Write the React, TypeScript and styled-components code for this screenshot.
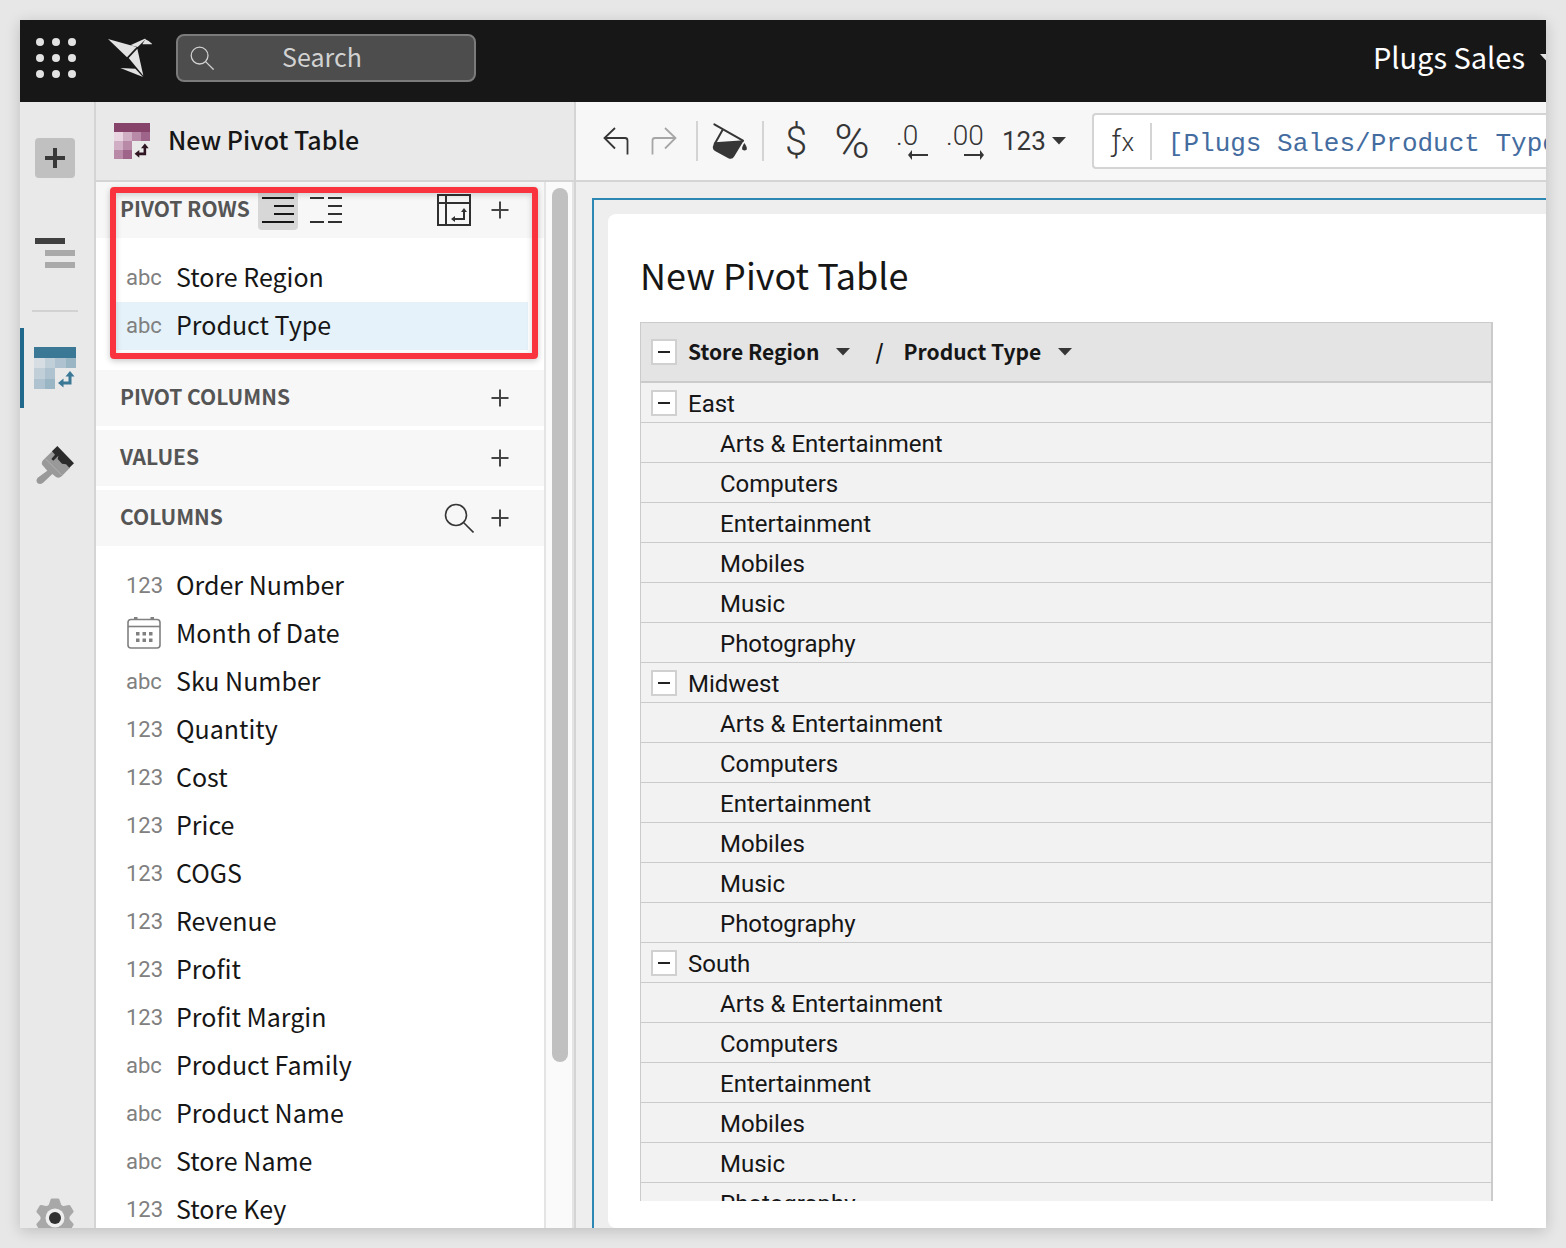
import React from "react";
import styled, { createGlobalStyle } from "styled-components";

const sans = `"Noto Sans CJK SC", "Noto Sans", sans-serif`;
const grid = `Roboto, "Liberation Sans", sans-serif`;
const mono = `"Liberation Mono", monospace`;

const GlobalStyle = createGlobalStyle`
  * { box-sizing: border-box; }
  body { margin: 0; background: #e7e7e7; color: #161616; font-family: ${sans}; }
  button, input { font: inherit; color: inherit; }
  h1, h2, h3, ul { margin: 0; padding: 0; font-weight: inherit; }
`;

const Page = styled.div`
  height: 100vh;
  padding: 20px;
`;

const Frame = styled.div`
  display: flex;
  flex-direction: column;
  height: 100%;
  overflow: hidden;
  background: #eeeeee;
  box-shadow: 0 3px 14px rgba(0, 0, 0, 0.18);
`;

const PlainButton = styled.button`
  display: flex;
  align-items: center;
  justify-content: center;
  flex: none;
  padding: 0;
  border: 0;
  background: none;
`;

/* ---- Top bar ---- */

const TopBar = styled.header`
  display: flex;
  align-items: center;
  flex: none;
  height: 82px;
  padding: 0 0 6px 16px;
  background: #171717;
  color: #fff;
`;

const LogoLink = styled.a`
  display: flex;
  margin: 0 24px 0 32px;
`;

const SearchBox = styled.label`
  display: flex;
  align-items: center;
  width: 300px;
  height: 48px;
  border: 2px solid #7b7b7b;
  border-radius: 8px;
  background: #4d4d4d;
  padding: 0 44px 0 12px;
`;

const SearchInput = styled.input`
  flex: 1;
  min-width: 0;
  padding: 0 0 5px;
  border: 0;
  outline: 0;
  background: none;
  font-size: 25px;
  line-height: 40px;
  text-align: center;
  &::placeholder { color: #d2d2d2; opacity: 1; }
`;

const WorkbookButton = styled(PlainButton)`
  gap: 15px;
  margin: 0 -8px 0 auto;
  font-size: 29px;
  line-height: 40px;
`;

const WorkbookName = styled.span`
  padding-bottom: 5px;
`;

/* ---- Body ---- */

const Body = styled.div`
  display: flex;
  flex: 1;
  min-height: 0;
`;

const Rail = styled.nav`
  display: flex;
  flex-direction: column;
  align-items: stretch;
  flex: none;
  gap: 16px;
  width: 76px;
  padding-top: 16px;
  overflow: hidden;
  border-right: 2px solid #d4d4d4;
  background: #e9e9e9;
`;

const RailButton = styled(PlainButton)<{ $active?: boolean; $last?: boolean }>`
  height: 80px;
  padding-right: ${(p) => (p.$active ? 8 : 4)}px;
  border-left: ${(p) => (p.$active ? "4px solid #21698c" : "0")};
  margin: ${(p) => (p.$last ? "auto 0 -30px" : "0")};
`;

const AddTile = styled.span`
  display: flex;
  padding: 10px;
  border-radius: 4px;
  background: #c0c0c0;
`;

const RailDivider = styled.hr`
  width: 46px;
  height: 2px;
  margin: 0 0 0 12px;
  border: 0;
  background: #d2d2d2;
`;

const Panel = styled.aside`
  display: flex;
  flex-direction: column;
  flex: none;
  width: 480px;
  border-right: 2px solid #d4d4d4;
  background: #fff;
`;

const PanelHeader = styled.div`
  display: flex;
  align-items: center;
  flex: none;
  gap: 18px;
  height: 80px;
  padding: 0 18px;
  border-bottom: 2px solid #d4d4d4;
  background: #e9e9e9;
`;

const PanelTitle = styled.h2`
  padding-bottom: 5px;
  font-size: 25px;
  line-height: 32px;
  font-weight: 500;
`;

const PanelBody = styled.div`
  display: flex;
  flex: 1;
  min-height: 0;
`;

const Sections = styled.div`
  position: relative;
  display: flex;
  flex-direction: column;
  flex: 1;
  gap: 4px;
  overflow: hidden;
  border-right: 2px solid #e4e4e4;
`;

const ScrollTrack = styled.div`
  flex: none;
  width: 28px;
  padding: 6px 0 0 6px;
  border-right: 2px solid #e4e4e4;
  background: #fafafa;
`;

const ScrollThumb = styled.div`
  width: 16px;
  height: 84%;
  border-radius: 8px;
  background: #c0c0c0;
`;

const SectionHeader = styled.div`
  display: flex;
  align-items: center;
  height: 56px;
  padding: 0 24px;
  background: #f7f7f7;
`;

const SectionTitle = styled.h3`
  margin-right: 8px;
  padding-bottom: 5px;
  color: #555555;
  font-size: 21px;
  line-height: 32px;
  font-weight: 600;
`;

const SectionTools = styled.div<{ $end?: boolean }>`
  display: flex;
  gap: ${(p) => (p.$end ? 6 : 8)}px;
  margin-left: ${(p) => (p.$end ? "auto" : 0)};
`;

const IconButton = styled(PlainButton)<{ $on?: boolean; $end?: boolean }>`
  justify-content: ${(p) => (p.$end ? "flex-end" : "center")};
  width: 40px;
  height: 40px;
  border-radius: 4px;
  background: ${(p) => (p.$on ? "#d7d7d7" : "none")};
`;

const FieldList = styled.ul`
  padding: 16px;
  list-style: none;
`;

const Field = styled.li<{ $selected?: boolean }>`
  display: flex;
  align-items: center;
  gap: 14px;
  height: 48px;
  padding: 0 14px;
  background: ${(p) => (p.$selected ? "#e5f2f9" : "none")};
  font-size: 25px;
  line-height: 32px;
`;

const FieldType = styled.span`
  display: flex;
  flex: none;
  width: 36px;
  color: #808080;
  font-family: ${grid};
  font-size: 22px;
`;

const FieldName = styled.span`
  padding-bottom: 5px;
`;

const Highlight = styled.div`
  position: absolute;
  top: 5px;
  left: 14px;
  right: 6px;
  height: 172px;
  border: 6px solid #f9343f;
  border-radius: 4px;
  box-shadow: 0 2px 6px rgba(0, 0, 0, 0.22), inset 0 2px 6px rgba(0, 0, 0, 0.16);
  pointer-events: none;
`;

/* ---- Main area ---- */

const Main = styled.main`
  display: flex;
  flex-direction: column;
  flex: 1;
  min-width: 0;
`;

const Toolbar = styled.div`
  display: flex;
  align-items: center;
  flex: none;
  height: 80px;
  padding-left: 22px;
  border-bottom: 2px solid #d4d4d4;
  background: #f7f7f7;
  color: #363636;
`;

const ToolGroup = styled.div<{ $gap: number; $inset?: number }>`
  display: flex;
  align-items: center;
  flex: none;
  gap: ${(p) => p.$gap}px;
  margin-left: ${(p) => p.$inset ?? 0}px;
`;

const ToolButton = styled(PlainButton)<{ $w: number }>`
  width: ${(p) => p.$w}px;
  height: 48px;
`;

const Glyph = styled.span<{ $size: number }>`
  padding-top: 2px;
  font-family: ${grid};
  font-weight: 300;
  font-size: ${(p) => p.$size}px;
  line-height: 40px;
`;

const DecimalButton = styled(ToolButton)`
  flex-direction: column;
  align-items: flex-end;
`;

const DecimalText = styled.span`
  align-self: flex-start;
  font-family: ${grid};
  font-weight: 300;
  font-size: 28px;
  line-height: 28px;
`;

const FormatButton = styled(PlainButton)`
  gap: 6px;
  margin: 0 26px 0 18px;
  font-family: ${grid};
  font-size: 26px;
`;

const Separator = styled.span`
  flex: none;
  width: 2px;
  height: 40px;
  margin: 0 14px;
  background: #d4d4d4;
`;

const FormulaBar = styled.label`
  display: flex;
  align-items: center;
  flex: 1;
  min-width: 0;
  height: 56px;
  border: 2px solid #d4d4d4;
  border-right: 0;
  border-radius: 4px 0 0 4px;
  background: #fff;
`;

const FormulaIcon = styled.span`
  display: flex;
  align-items: baseline;
  justify-content: center;
  flex: none;
  width: 58px;
  padding-left: 2px;
  font-family: ${grid};
  font-weight: 300;
  font-size: 30px;
  line-height: 36px;
  border-right: 2px solid #d4d4d4;
`;

const FormulaX = styled.span`
  font-size: 26px;
`;

const FormulaInput = styled.input`
  flex: 1;
  min-width: 0;
  padding: 6px 0 0 16px;
  border: 0;
  outline: 0;
  background: none;
  color: #446c9f;
  font-family: ${mono};
  font-size: 26px;
  line-height: 40px;
`;

const Selection = styled.section`
  display: flex;
  flex: 1;
  min-height: 0;
  margin: 16px 0 0 16px;
  padding: 14px 0 0 14px;
  border-top: 2px solid #2c87b2;
  border-left: 2px solid #2c87b2;
`;

const Card = styled.div`
  display: flex;
  flex-direction: column;
  flex: 1;
  min-width: 0;
  padding: 36px 53px 27px 32px;
  border-radius: 8px 0 0 8px;
  background: #fff;
`;

const CardTitle = styled.h1`
  flex: none;
  height: 72px;
  font-size: 36px;
  line-height: 48px;
`;

const TableClip = styled.div`
  flex: 1;
  min-height: 0;
  overflow: hidden;
  border: solid #cbcbcb;
  border-width: 1px 2px 0 1px;
`;

const PivotTable = styled.table`
  width: 100%;
  border-collapse: separate;
  border-spacing: 0;
  background: #f2f2f2;
  color: #161616;
  font-family: ${grid};
  font-size: 24px;
  line-height: 28px;
`;

const HeadCell = styled.th`
  height: 60px;
  padding: 0 10px 2px;
  border-bottom: 2px solid #cbcbcb;
  background: #e4e4e4;
  font-family: ${sans};
  font-size: 21px;
  font-weight: 600;
  text-align: left;
`;

const Cell = styled.td<{ $nested?: boolean }>`
  height: 40px;
  padding: 2px 10px 0 ${(p) => (p.$nested ? 79 : 10)}px;
  border-bottom: 1px solid #cbcbcb;
`;

const CellRow = styled.div`
  display: flex;
  align-items: center;
`;

const Toggle = styled(PlainButton)<{ $head?: boolean }>`
  width: 26px;
  height: 26px;
  margin: ${(p) => (p.$head ? "2px 11px 0 0" : "0 11px 2px 0")};
  border: 2px solid #d0d0d0;
  background: #fff;
`;

const CaretButton = styled(PlainButton)`
  width: 48px;
  height: 28px;
  padding-top: 2px;
`;

const Slash = styled.span`
  margin: 0 20px 0 8px;
`;

/* ---- Drawings ---- */

const Caret = ({ color = "#363636" }: { color?: string }) => (
  <svg width="14" height="8" viewBox="0 0 14 8" aria-hidden="true">
    <path d="M0 0h14L7 7.5z" fill={color} />
  </svg>
);

const AppsIcon = () => (
  <svg width="40" height="40" viewBox="0 0 40 40" fill="#e2e2e2" aria-hidden="true">
    {[4, 20, 36].map((y) => [4, 20, 36].map((x) => <circle key={`${x}-${y}`} cx={x} cy={y} r="4" />))}
  </svg>
);

const Bird = () => (
  <svg width="44" height="40" viewBox="24 39 132 120" fill="#e2e2e2" aria-hidden="true">
    <path d="M24 42 110 66 81 97z" />
    <path d="M91 61 134 41 138 42 113 66z" />
    <path d="M136 43 146 48 158 58H127z" />
    <path d="M112 71 130 152 86 99z" />
    <path d="M61 129 106 131 129 156z" />
  </svg>
);

const SearchIcon = ({ size, color }: { size: number; color: string }) => (
  <svg width={size} height={size} viewBox="0 0 30 30" fill="none" stroke={color} strokeWidth="1.6" aria-hidden="true">
    <circle cx="12" cy="12" r="10.5" />
    <path d="m19.5 19.5 10 10" />
  </svg>
);

const Plus = () => (
  <svg width="18" height="18" viewBox="0 0 18 18" stroke="#444" strokeWidth="2" aria-hidden="true">
    <path d="M9 .5v17M.5 9h17" />
  </svg>
);

const BoldPlus = () => (
  <svg width="20" height="20" viewBox="0 0 20 20" stroke="#383838" strokeWidth="4" aria-hidden="true">
    <path d="M10 0v20M0 10h20" />
  </svg>
);

const OutlineIcon = () => (
  <svg width="40" height="32" viewBox="0 0 40 32" aria-hidden="true">
    <path d="M0 0h30v6H0z" fill="#404040" />
    <path d="M10 12h30v6H10zM10 24h30v6H10z" fill="#aaa" />
  </svg>
);

const PivotIcon = ({ size, c }: { size: number; c: string[] }) => (
  <svg width={size} height={size} viewBox="0 0 42 42" shapeRendering="crispEdges" aria-hidden="true">
    <path d="M0 0h42v10.5H0z" fill={c[0]} />
    <path d="M0 10.5h11v10.5H0z" fill={c[1]} />
    <path d="M11 10.5h10v10.5H11zM0 21h11v10.5H0z" fill={c[2]} />
    <path d="M21 10.5h10.5v10.5H21zM0 31.5h11V42H0z" fill={c[3]} />
    <path d="M31.5 10.5H42v10.5H31.5zM11 31.5h10V42H11z" fill={c[4]} />
    <path d="M11 21h10v10.5H11z" fill={c[5]} />
    <g shapeRendering="geometricPrecision" fill={c[6]}>
      <path d="M34.5 28h3v9.5H28v-3h6.5z" />
      <path d="m36 24 4.5 5.5h-9zM24 36l5.5-4.5v9z" />
    </g>
  </svg>
);

const BrushIcon = () => (
  <svg width="40" height="40" viewBox="45 72 120 120" aria-hidden="true">
    <path d="M98 92 150 143 125 169q-9 8-18 1l-10-8-26 25q-8 8-18 3-7-8 0-17l29-21-15-17q-4-7 2-14z" fill="#999" />
    <path d="m112 78 50 52-14 13-10-10-12-2-13-14 2-10-15 15-6-5 11-13-9-10z" fill="#2b2b2b" />
    <path d="m77 117 48 48" stroke="#bdbdbd" strokeWidth="2" />
  </svg>
);

const GearIcon = () => (
  <svg width="40" height="40" viewBox="0 0 40 40" aria-hidden="true">
    <g fill="#a8a8a8" stroke="#a8a8a8" strokeWidth="3" strokeLinejoin="round">
      <circle cx="20" cy="20" r="13" />
      {[0, 60, 120, 180, 240, 300].map((a) => (
        <path key={a} d="m15 8 2-6h6l2 6z" transform={`rotate(${a} 20 20)`} />
      ))}
    </g>
    <circle cx="20" cy="20" r="9.5" fill="#eee" />
    <circle cx="20" cy="20" r="6" fill="#303030" />
  </svg>
);

const NestedRowsIcon = () => (
  <svg width="32" height="26" viewBox="0 0 32 26" stroke="#161616" strokeWidth="2" aria-hidden="true">
    <path d="M0 1h32M12 9h20M12 17h20M0 25h32" />
  </svg>
);

const SplitRowsIcon = () => (
  <svg width="32" height="26" viewBox="0 0 32 26" stroke="#303030" strokeWidth="2" aria-hidden="true">
    <path d="M0 1h14M18 1h14M18 9h14M18 17h14M0 25h14M18 25h14" />
  </svg>
);

const SwapIcon = () => (
  <svg width="34" height="32" viewBox="0 0 34 32" fill="none" stroke="#303030" strokeWidth="2" aria-hidden="true">
    <path d="M1 1h32v30H1zM1 9h32M9 1v30M27 17v8H17" />
    <path d="m24 18 3-4 3 4zM18 22l-4 3 4 3z" fill="#303030" stroke="none" />
  </svg>
);

const CalendarIcon = () => (
  <svg width="36" height="34" viewBox="0 0 36 34" fill="none" stroke="#808080" strokeWidth="1.6" aria-hidden="true">
    <rect x="2" y="2.5" width="32" height="28.5" rx="3" />
    <path d="M2 9.5h32" />
    <path d="M8 1.5h3.5M24.5 1.5H28" strokeWidth="3" />
    <g fill="#808080" stroke="none">
      {[10, 16.5, 23].map((x) => [15, 21.5].map((y) => <rect key={`${x}-${y}`} x={x} y={y} width="3.5" height="3.5" />))}
    </g>
  </svg>
);

const UndoIcon = ({ redo }: { redo?: boolean }) => (
  <svg width="26" height="28" viewBox="0 0 26 28" fill="none" stroke={redo ? "#a6a6a6" : "#363636"} strokeWidth="1.8" aria-hidden="true">
    <g transform={redo ? "matrix(-1 0 0 1 26 0)" : undefined}>
      <path d="M12 1 1.5 11 12 21.5M1.5 11H22q2.5 0 2.5 2.5v14" />
    </g>
  </svg>
);

const BucketIcon = () => (
  <svg width="36" height="38" viewBox="366 66 108 114" fill="none" aria-hidden="true">
    <path d="m373 73 86 49M398 89l-24 43" stroke="#363636" strokeWidth="6" strokeLinecap="round" />
    <path d="m374 127 88-6-29 48q-6 11-18 6l-40-22q-10-6-5-17z" fill="#363636" />
    <path d="M463 129q10 14 7 19-6 7-13 0-3-5 6-19z" fill="#363636" />
  </svg>
);

const ShiftArrow = ({ right }: { right?: boolean }) => (
  <svg width="20" height="10" viewBox="0 0 20 10" aria-hidden="true">
    <g transform={right ? "matrix(-1 0 0 1 20 0)" : undefined} fill="#363636">
      <path d="M2 4h18v2H2z" />
      <path d="m0 5 4-5v10z" />
    </g>
  </svg>
);

const MinusIcon = () => (
  <svg width="12" height="2" viewBox="0 0 12 2" aria-hidden="true">
    <path d="M0 0h12v2H0z" fill="#222" />
  </svg>
);

/* ---- Data ---- */

type Kind = "abc" | "123" | "date";

const pivotRows: [Kind, string][] = [
  ["abc", "Store Region"],
  ["abc", "Product Type"],
];

const columns: [Kind, string][] = [
  ["123", "Order Number"],
  ["date", "Month of Date"],
  ["abc", "Sku Number"],
  ["123", "Quantity"],
  ["123", "Cost"],
  ["123", "Price"],
  ["123", "COGS"],
  ["123", "Revenue"],
  ["123", "Profit"],
  ["123", "Profit Margin"],
  ["abc", "Product Family"],
  ["abc", "Product Name"],
  ["abc", "Store Name"],
  ["123", "Store Key"],
];

const regions = ["East", "Midwest", "South"];
const productTypes = ["Arts & Entertainment", "Computers", "Entertainment", "Mobiles", "Music", "Photography"];

const plum = ["#87446b", "#e8d5e1", "#d0afc4", "#b98aa8", "#9f6489", "#b98aa8", "#2f1522"];
const teal = ["#3a7896", "#d6dee3", "#c1d0d8", "#aec3cf", "#9ab5c4", "#aec3cf", "#3a7896"];

const Fields = ({ items, selected }: { items: [Kind, string][]; selected?: string }) => (
  <FieldList>
    {items.map(([kind, name]) => (
      <Field key={name} $selected={name === selected}>
        <FieldType>{kind === "date" ? <CalendarIcon /> : kind}</FieldType>
        <FieldName>{name}</FieldName>
      </Field>
    ))}
  </FieldList>
);

const Section = ({ title, tools, extra, children }: {
  title: string;
  tools?: React.ReactNode;
  extra?: React.ReactNode;
  children?: React.ReactNode;
}) => (
  <section>
    <SectionHeader>
      <SectionTitle>{title}</SectionTitle>
      {tools && <SectionTools>{tools}</SectionTools>}
      <SectionTools $end>
        {extra}
        <IconButton aria-label={`Add to ${title.toLowerCase()}`}><Plus /></IconButton>
      </SectionTools>
    </SectionHeader>
    {children}
  </section>
);

export default function App() {
  return (
    <Page>
      <GlobalStyle />
      <Frame>
        <TopBar>
          <PlainButton aria-label="Apps"><AppsIcon /></PlainButton>
          <LogoLink href="#" aria-label="Home"><Bird /></LogoLink>
          <SearchBox>
            <SearchIcon size={24} color="#d2d2d2" />
            <SearchInput type="text" placeholder="Search" aria-label="Search" />
          </SearchBox>
          <WorkbookButton><WorkbookName>Plugs Sales</WorkbookName><Caret color="#e2e2e2" /></WorkbookButton>
        </TopBar>
        <Body>
          <Rail aria-label="Tools">
            <RailButton aria-label="Add element"><AddTile><BoldPlus /></AddTile></RailButton>
            <RailButton aria-label="Outline"><OutlineIcon /></RailButton>
            <RailDivider />
            <RailButton $active aria-label="Pivot table"><PivotIcon size={42} c={teal} /></RailButton>
            <RailButton aria-label="Format"><BrushIcon /></RailButton>
            <RailButton $last aria-label="Settings"><GearIcon /></RailButton>
          </Rail>
          <Panel>
            <PanelHeader>
              <PivotIcon size={36} c={plum} />
              <PanelTitle>New Pivot Table</PanelTitle>
            </PanelHeader>
            <PanelBody>
              <Sections>
                <Section
                  title="PIVOT ROWS"
                  tools={
                    <>
                      <IconButton $on aria-label="Nested rows"><NestedRowsIcon /></IconButton>
                      <IconButton aria-label="Separate rows"><SplitRowsIcon /></IconButton>
                    </>
                  }
                  extra={<IconButton aria-label="Swap rows and columns"><SwapIcon /></IconButton>}
                >
                  <Fields items={pivotRows} selected="Product Type" />
                </Section>
                <Section title="PIVOT COLUMNS" />
                <Section title="VALUES" />
                <Section
                  title="COLUMNS"
                  extra={<IconButton $end aria-label="Search columns"><SearchIcon size={30} color="#363636" /></IconButton>}
                >
                  <Fields items={columns} />
                </Section>
                <Highlight />
              </Sections>
              <ScrollTrack><ScrollThumb /></ScrollTrack>
            </PanelBody>
          </Panel>
          <Main>
            <Toolbar>
              <ToolGroup $gap={12}>
                <ToolButton $w={36} aria-label="Undo"><UndoIcon /></ToolButton>
                <ToolButton $w={36} aria-label="Redo"><UndoIcon redo /></ToolButton>
              </ToolGroup>
              <Separator />
              <ToolButton $w={36} aria-label="Fill color"><BucketIcon /></ToolButton>
              <Separator />
              <ToolButton $w={36} aria-label="Currency"><Glyph $size={40}>$</Glyph></ToolButton>
              <ToolButton $w={76} aria-label="Percent"><Glyph $size={48}>%</Glyph></ToolButton>
              <ToolGroup $gap={18} $inset={6}>
                <DecimalButton $w={32} aria-label="Decrease decimals"><DecimalText>.0</DecimalText><ShiftArrow /></DecimalButton>
                <DecimalButton $w={38} aria-label="Increase decimals"><DecimalText>.00</DecimalText><ShiftArrow right /></DecimalButton>
              </ToolGroup>
              <FormatButton>123<Caret /></FormatButton>
              <FormulaBar>
                <FormulaIcon aria-hidden="true">ƒ<FormulaX>x</FormulaX></FormulaIcon>
                <FormulaInput type="text" aria-label="Formula" defaultValue="[Plugs Sales/Product Type]" />
              </FormulaBar>
            </Toolbar>
            <Selection>
              <Card>
                <CardTitle>New Pivot Table</CardTitle>
                <TableClip>
                  <PivotTable>
                    <thead>
                      <tr>
                        <HeadCell scope="col">
                          <CellRow>
                            <Toggle $head aria-label="Collapse all"><MinusIcon /></Toggle>
                            Store Region
                            <CaretButton aria-label="Store Region menu"><Caret /></CaretButton>
                            <Slash>/</Slash>
                            Product Type
                            <CaretButton aria-label="Product Type menu"><Caret /></CaretButton>
                          </CellRow>
                        </HeadCell>
                      </tr>
                    </thead>
                    <tbody>
                      {regions.map((region) => (
                        <React.Fragment key={region}>
                          <tr>
                            <Cell>
                              <CellRow>
                                <Toggle aria-label={`Collapse ${region}`}><MinusIcon /></Toggle>
                                {region}
                              </CellRow>
                            </Cell>
                          </tr>
                          {productTypes.map((type) => (
                            <tr key={type}><Cell $nested>{type}</Cell></tr>
                          ))}
                        </React.Fragment>
                      ))}
                    </tbody>
                  </PivotTable>
                </TableClip>
              </Card>
            </Selection>
          </Main>
        </Body>
      </Frame>
    </Page>
  );
}
